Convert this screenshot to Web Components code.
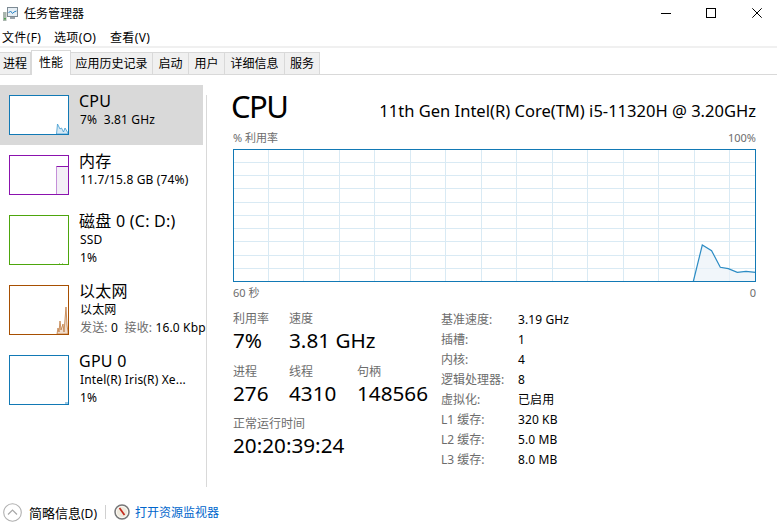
<!DOCTYPE html>
<html lang="zh"><head><meta charset="utf-8"><title>任务管理器</title>
<style>
html,body{margin:0;padding:0;background:#fff;height:100%;overflow:hidden}
body{font:12px "Noto Sans","Noto Sans CJK SC",sans-serif;color:#000}
task-manager{width:777px;height:529px}
</style></head><body>
<task-manager></task-manager>
<script>
const FONT="'Noto Sans','Noto Sans CJK SC',sans-serif";
customElements.define('title-bar',class extends HTMLElement{
  constructor(){super();this.attachShadow({mode:'open'}).innerHTML=`<style>
  :host{display:flex;align-items:center;height:25px;padding-left:3px}
  svg{display:block;flex:none}
  .ic{margin-top:2px}
  .t{margin-left:6px;font-size:12px;flex:1}
  .b{height:25px;display:flex;align-items:center;justify-content:center}
  </style>
  <svg class="ic" width="15" height="15" viewBox="0 0 15 15"><rect x="0" y="6" width="3.5" height="9" fill="#a9b5ae"/><rect x="1" y="12" width="2" height="1.5" fill="#4fa34f"/><rect x="4.5" y="1.5" width="10" height="9" fill="#e6eef4" stroke="#7d8a94"/><path d="M5.5 7 L7.5 5 L9.5 7.5 L11 6 L13.5 5" fill="none" stroke="#2a84c6" stroke-width="1"/><rect x="7" y="11" width="5" height="2" fill="#9aa3aa"/></svg>
  <span class="t">任务管理器</span>
  <span class="b" style="width:44px"><svg width="10" height="10" viewBox="0 0 10 10"><path d="M0 5.5H10" stroke="#000"/></svg></span>
  <span class="b" style="width:46px;margin-right:3px"><svg width="10" height="10" viewBox="0 0 10 10"><rect x=".5" y=".5" width="9" height="9" fill="none" stroke="#000"/></svg></span>
  <span class="b" style="width:40px"><svg width="10" height="10" viewBox="0 0 10 10"><path d="M.3 .3L9.7 9.7M9.7 .3L.3 9.7" stroke="#000" stroke-width="1"/></svg></span>`;}
});
customElements.define('menu-bar',class extends HTMLElement{
  constructor(){super();this.attachShadow({mode:'open'}).innerHTML=`<style>
  :host{display:flex;height:19px;padding:2px 0 0 2px;gap:14px;align-items:center;font-size:12px;border-bottom:2px solid #f0f0f0}
  span{letter-spacing:.35px;white-space:nowrap}
  </style><span style="width:38px">文件(F)</span><span style="width:42px">选项(O)</span><span>查看(V)</span>`;}
});
customElements.define('tab-strip',class extends HTMLElement{
  constructor(){super();
  const tabs=[['进程',31],['性能',40,1],['应用历史记录',82],['启动',36],['用户',36],['详细信息',60],['服务',35]];
  this.attachShadow({mode:'open'}).innerHTML=`<style>
  :host{display:flex;height:24px;margin-top:2px;border-bottom:1px solid #d9d9d9;align-items:flex-end}
  span{box-sizing:border-box;height:22px;background:#f0f0f0;border-top:1px solid #d9d9d9;border-right:1px solid #d9d9d9;display:flex;align-items:center;justify-content:center;font-size:12px;white-space:nowrap;padding-bottom:1px}
  span.on{height:25px;background:#fff;border:1px solid #d9d9d9;border-bottom:0;margin-bottom:-1px;padding-bottom:3px;position:relative}
  </style>`+tabs.map(t=>`<span class="${t[2]?'on':''}" style="width:${t[1]}px">${t[0]}</span>`).join('');}
});
customElements.define('side-item',class extends HTMLElement{
  connectedCallback(){
    const a=n=>this.getAttribute(n)||'';
    const h=+a('h')||60, thumbH=h-20, col=a('color');
    const w=60;
    const pts=a('pts'), fill=a('fill'), line=a('line')||col, extra=a('extra');
    let g=pts?`<path d="${pts}" fill="${fill}" stroke="${line}" stroke-width=".8"/>`:'';
    this.attachShadow({mode:'open'}).innerHTML=`<style>
    :host{display:flex;width:203px;height:${h}px;box-sizing:border-box;padding:10px 0 0 9px;${this.hasAttribute('on')?'background:#d9d9d9;':''}gap:10px}
    svg{display:block;flex:none}
    .x{display:flex;flex-direction:column;white-space:nowrap;width:127px;flex:none;margin-top:-4px}
    .n{font-size:16px;letter-spacing:.25px;line-height:20px;color:#000}
    .c{overflow:hidden;display:block}
    ::slotted(*){display:block;font-size:12px;line-height:18px;margin-left:1px;letter-spacing:.15px}
    </style>
    <svg width="${w}" height="${thumbH}" viewBox="0 0 ${w} ${thumbH}"><rect x=".5" y=".5" width="${w-1}" height="${thumbH-1}" fill="#fff"/>${g}${extra}<rect x=".5" y=".5" width="${w-1}" height="${thumbH-1}" fill="none" stroke="${col}"/></svg>
    <div class="x"><div class="n">${a('name')}</div><div class="c"><slot></slot></div></div>`;
  }
});
customElements.define('side-bar',class extends HTMLElement{
  constructor(){super();this.attachShadow({mode:'open'}).innerHTML=`<style>
  :host{display:block;width:206px;flex:none}
  </style><slot></slot>`;}
});
customElements.define('usage-graph',class extends HTMLElement{
  connectedCallback(){
    let l='';
    for(let i=0;i<14;i++){const x=Math.round(268+35.46*i)+.5;l+=`M${x-233} 0V133`;}
    for(let i=0;i<9;i++){const y=Math.round(162+13.23*i)+.5;l+=`M0 ${y-149}H523`;}
    const p=[[693.3,281.5],[702.3,245],[711.6,250.7],[720.3,267.3],[728.3,268.7],[737.3,272.3],[746,271.3],[755.5,272.3]].map(q=>[q[0]-233,q[1]-149]);
    const d='M'+p.map(q=>q.join(' ')).join('L');
    this.attachShadow({mode:'open'}).innerHTML=`<style>:host{display:block;height:133px}svg{display:block}</style>
    <svg width="523" height="133" viewBox="0 0 523 133"><rect width="523" height="133" fill="#fff"/><path d="${l}" stroke="#d9eaf4" fill="none"/><path d="${d}V132.5H${p[0][0]}Z" fill="#f1f6fa"/><path d="${l}" stroke="#d9eaf4" stroke-opacity=".55" fill="none"/><path d="${d}" fill="none" stroke="#2c8cc4" stroke-width="1.2"/><rect x=".5" y=".5" width="522" height="132" fill="none" stroke="#1279b5"/></svg>`;
  }
});
customElements.define('stat-box',class extends HTMLElement{
  connectedCallback(){
    const a=n=>this.getAttribute(n);
    this.attachShadow({mode:'open'}).innerHTML=`<style>
    :host{display:block;white-space:nowrap}
    .l{font-size:12px;line-height:17px;color:#6d6d6d}
    .v{font-size:20.7px;line-height:28px;color:#000;margin:-1px 0 1px}
    </style><div class="l">${a('label')}</div><div class="v">${a('value')}</div>`;
  }
});
customElements.define('spec-table',class extends HTMLElement{
  connectedCallback(){
    const rows=[['基准速度:','3.19 GHz'],['插槽:','1'],['内核:','4'],['逻辑处理器:','8'],['虚拟化:','已启用'],['L1 缓存:','320 KB'],['L2 缓存:','5.0 MB'],['L3 缓存:','8.0 MB']];
    this.attachShadow({mode:'open'}).innerHTML=`<style>
    :host{display:grid;grid-template-columns:77px auto;grid-auto-rows:20px;align-items:center;font-size:12px;white-space:nowrap}
    .l{color:#6d6d6d}.r{letter-spacing:.1px}
    </style>`+rows.map(r=>`<span class="l">${r[0]}</span><span class="r">${r[1]}</span>`).join('');
  }
});
customElements.define('perf-panel',class extends HTMLElement{
  constructor(){super();this.attachShadow({mode:'open'}).innerHTML=`<style>
  :host{display:block;flex:none;width:523px;margin-left:26px}
  .head{display:flex;justify-content:space-between;height:36px}
  .big{font-size:31px;letter-spacing:-1.6px;line-height:36px;margin:3px 0 0 -2px}
  .model{font-size:16.55px;line-height:22px;margin-top:15px;white-space:nowrap}
  .cap{display:flex;justify-content:space-between;color:#6d6d6d;font-size:11px;height:16px;line-height:16px;margin-top:9px;margin-bottom:3px}
  .foot{display:flex;justify-content:space-between;color:#6d6d6d;font-size:11px;line-height:16px;height:16px;margin-top:3px}
  .low{display:flex;margin-top:9px}
  .stats{width:208px;flex:none;display:grid;grid-template-columns:56px 68px auto;grid-template-rows:auto auto auto;align-content:start}
  .r1{padding-bottom:8px}.r2{padding-bottom:7px}
  .up{grid-column:1/4}
  spec-table{margin-top:-1px}
  </style>
  <div class="head"><span class="big">CPU</span><span class="model">11th Gen Intel(R) Core(TM) i5-11320H @ 3.20GHz</span></div>
  <div class="cap"><span>% 利用率</span><span>100%</span></div>
  <usage-graph></usage-graph>
  <div class="foot"><span>60 秒</span><span>0</span></div>
  <div class="low"><div class="stats">
    <stat-box class="r1" label="利用率" value="7%"></stat-box><stat-box class="r1" label="速度" value="3.81 GHz" style="grid-column:2/4"></stat-box>
    <stat-box class="r2" label="进程" value="276"></stat-box><stat-box class="r2" label="线程" value="4310"></stat-box><stat-box class="r2" label="句柄" value="148566"></stat-box>
    <stat-box class="up" label="正常运行时间" value="20:20:39:24"></stat-box>
  </div><spec-table></spec-table></div>`;}
});
customElements.define('foot-bar',class extends HTMLElement{
  constructor(){super();this.attachShadow({mode:'open'}).innerHTML=`<style>
  :host{display:flex;align-items:center;height:28px;padding-left:3px;font-size:12px}
  svg{display:block;flex:none}
  .a{margin-left:7px;font-size:13px;width:68px;white-space:nowrap}
  .a small{font-size:12px}
  .s{width:1px;height:14px;background:#d0d0d0;margin:0 8px}
  .k{color:#0066cc;margin-left:5px}
  </style>
  <svg width="19" height="19" viewBox="0 0 19 19"><circle cx="9.5" cy="9.5" r="8.8" fill="#fff" stroke="#b0b0b0" stroke-width="1.1"/><path d="M5 11.5L9.5 7L14 11.5" fill="none" stroke="#a8a8a8" stroke-width="1.2"/></svg>
  <span class="a">简略信息<small>(D)</small></span><span class="s"></span>
  <svg width="16" height="16" viewBox="0 0 16 16"><circle cx="8" cy="8" r="7" fill="#efe9dc" stroke="#77787a" stroke-width="1.5"/><circle cx="8" cy="8" r="5.6" fill="none" stroke="#fff" stroke-width=".7"/><path d="M5.5 4L10.5 11" stroke="#c5281c" stroke-width="1.7"/></svg>
  <span class="k">打开资源监视器</span>`;}
});
customElements.define('task-manager',class extends HTMLElement{
  constructor(){super();this.attachShadow({mode:'open'}).innerHTML=`<style>
  :host{display:flex;flex-direction:column;width:777px;height:529px;overflow:hidden;background:#fff;font-family:${FONT}}
  .main{display:flex;height:417px;margin-top:10px;flex:none}
  .div{width:1px;height:392px;background:#d9d9d9;margin-top:10px;flex:none}
  foot-bar{margin-top:-4px}
  </style>
  <title-bar></title-bar><menu-bar></menu-bar><tab-strip></tab-strip>
  <div class="main">
    <side-bar>
      <side-item on h="60" color="#1279b5" name="CPU" pts="M47.5 39L48.5 29L51 34L52.5 33L54.5 37L56 33L59 38V39Z" fill="#d8e9f4" line="#3d9ad0"><span>7%&nbsp; 3.81 GHz</span></side-item>
      <side-item h="60" color="#8b12ae" name="内存" extra='<rect x="48" y="11" width="11" height="28" fill="#f3eff6"/><path d="M47.5 39.5V11.5" stroke="#c48fd8" fill="none"/><path d="M47.5 11.5H59.5" stroke="#8b12ae" fill="none"/>'><span>11.7/15.8 GB (74%)</span></side-item>
      <side-item h="70" color="#4da60c" name="磁盘 0 (C: D:)" extra='<rect x="50" y="48" width="1" height="1" fill="#a8d488"/><rect x="53" y="48" width="1" height="1" fill="#a8d488"/>'><span>SSD</span><span>1%</span></side-item>
      <side-item h="70" color="#a74f01" name="以太网" pts="M48 49L49 43L50 47L51 36L52 45L54 39L55 47L57 22L58 40L59 47V49Z" fill="#f0dccb" line="#bf7a40"><span>以太网</span><span><span style="color:#6d6d6d;margin:0">发送:</span> 0&nbsp; <span style="color:#6d6d6d;margin:0">接收:</span> 16.0 Kbps</span></side-item>
      <side-item h="70" color="#1279b5" name="GPU 0" extra='<rect x="56" y="47" width="3" height="2" fill="#9cc8e4"/>'><span>Intel(R) Iris(R) Xe...</span><span>1%</span></side-item>
    </side-bar>
    <div class="div"></div>
    <perf-panel></perf-panel>
  </div>
  <foot-bar></foot-bar>`;}
});
</script>
</body></html>
